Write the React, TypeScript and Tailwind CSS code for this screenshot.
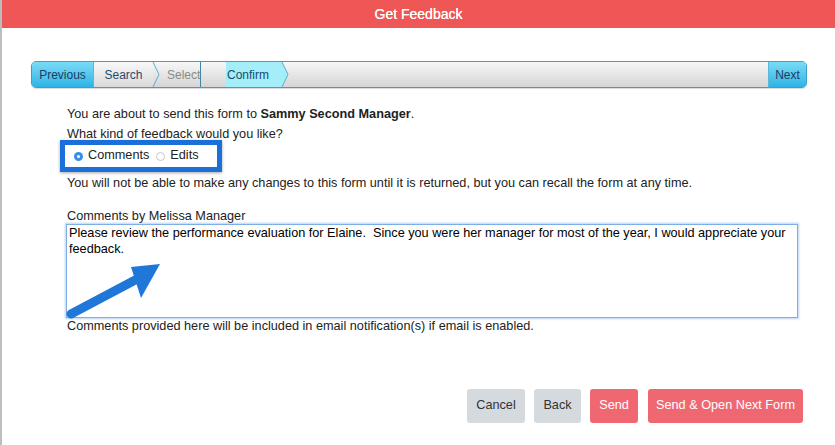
import React from 'react';

function Chevron({ className }: { className: string }) {
  return (
    <svg className={className} width="8" height="27" viewBox="0 0 8 27" fill="none">
      <path d="M0.5 0 L7 13.5 L0.5 27" stroke="#5aaed2" strokeWidth="1" />
    </svg>
  );
}

function Radio({ checked }: { checked: boolean }) {
  return checked ? (
    <span className="w-[9px] h-[9px] rounded-full bg-[#3a8ee6] flex items-center justify-center">
      <span className="w-[3px] h-[3px] rounded-full bg-white" />
    </span>
  ) : (
    <span className="w-[9px] h-[9px] rounded-full border border-[#c8c8c8] bg-white" />
  );
}

export default function App() {
  return (
    <div className="flex w-[835px] h-[445px] bg-white overflow-hidden font-['Liberation_Sans',Arial,sans-serif] text-[12.7px] text-[#222]">
      {/* window edge behind the dialog */}
      <div className="w-[2px] shrink-0 bg-[#bdbdbd]" />

      <div className="flex-1 flex flex-col">
        {/* Header */}
        <div className="h-[28px] shrink-0 bg-[#ef5656] flex items-center justify-center text-white text-[14px] [text-shadow:0_0_0.4px_#fff]">
          Get Feedback
        </div>

        {/* Wizard */}
        <div className="mt-[33px] ml-[29px] w-[776px] h-[27px] flex rounded-[5px] border border-[#3e9fc9] bg-gradient-to-b from-[#f7f7f7] to-[#d5d5d5] text-[12px] text-[#1b3d5e] shadow-[0_1px_1px_rgba(0,0,0,0.15)] overflow-hidden">
          <div className="w-[62px] h-full flex items-center justify-center bg-gradient-to-b from-[#79dbf7] to-[#2ab3e5] border-r border-[#5ab8dc]">
            Previous
          </div>
          <div className="relative w-[59px] h-full flex items-center justify-center bg-gradient-to-b from-[#f8f8f8] to-[#dadada] text-[#1f4c72]">
            Search
            <Chevron className="absolute -right-[7px] top-[-1px] z-10" />
          </div>
          <div className="w-[48px] h-full flex items-center pl-[14px] text-[#8a8a8a] border-r border-[#3f86a8] overflow-hidden whitespace-nowrap">
            Select
          </div>
          <div className="w-[25px]" />
          <div className="relative w-[56px] h-full flex items-center pl-[1px] bg-[#a3eef8] text-[#1c4a6a]">
            Confirm
            <svg className="absolute -right-[7px] top-[-1px] z-10" width="8" height="27" viewBox="0 0 8 27" fill="none">
              <path d="M0 0 L7 13.5 L0 27 Z" fill="#a3eef8" />
              <path d="M0.5 0 L7 13.5 L0.5 27" stroke="#5aaed2" strokeWidth="1" />
            </svg>
          </div>
          <div className="flex-1" />
          <div className="w-[38px] h-full flex items-center justify-center bg-gradient-to-b from-[#79dbf7] to-[#2ab3e5] border-l border-[#5ab8dc]">
            Next
          </div>
        </div>

        {/* Body */}
        <div className="pl-[65px] mt-[16px] flex flex-col">
          <p className="leading-[20px]">
            You are about to send this form to <b>Sammy Second Manager</b>.
          </p>
          <p className="leading-[20px]">What kind of feedback would you like?</p>

          <div className="-ml-[7px] -mt-[4px] w-[162px] h-[32px] border-[5px] border-[#1a6fd8] shadow-[0_1px_3px_rgba(0,0,0,0.35)] flex items-center pl-[9px] gap-[5px] bg-white">
            <Radio checked />
            <span>Comments</span>
            <span className="ml-[2px] flex">
              <Radio checked={false} />
            </span>
            <span>Edits</span>
          </div>

          <p className="mt-[1px] leading-[20px]">
            You will not be able to make any changes to this form until it is returned, but you can recall the form at any time.
          </p>

          <p className="mt-[15px] leading-[16px]">Comments by Melissa Manager</p>

          <div className="relative -ml-[1px] w-[732px] h-[94px] border border-[#7eaee6] shadow-[0_0_2px_1px_rgba(126,174,230,0.55)] px-[2px] leading-[16px] text-black whitespace-pre-wrap">
            {'Please review the performance evaluation for Elaine.  Since you were her manager for most of the year, I would appreciate your feedback.'}
            <svg className="absolute left-0 top-0 overflow-visible" width="100" height="100" viewBox="0 0 100 100">
              <line x1="4" y1="89" x2="72" y2="53" stroke="#1f78d8" strokeWidth="9" strokeLinecap="round" />
              <polygon points="93,39 64,42 74,73" fill="#1f78d8" />
            </svg>
          </div>

          <p className="leading-[16px]">
            Comments provided here will be included in email notification(s) if email is enabled.
          </p>
        </div>

        {/* Footer buttons */}
        <div className="mt-[55px] pr-[32px] flex justify-end gap-[9px]">
          <button className="w-[58px] h-[34px] rounded-[3px] bg-[#d5dadf] text-[#333]">Cancel</button>
          <button className="w-[47px] h-[34px] rounded-[3px] bg-[#d5dadf] text-[#333]">Back</button>
          <button className="w-[48px] h-[34px] rounded-[3px] bg-[#ef6871] text-white">Send</button>
          <button className="ml-[1px] w-[155px] h-[34px] rounded-[3px] bg-[#ef6871] text-white">Send &amp; Open Next Form</button>
        </div>
      </div>
    </div>
  );
}
